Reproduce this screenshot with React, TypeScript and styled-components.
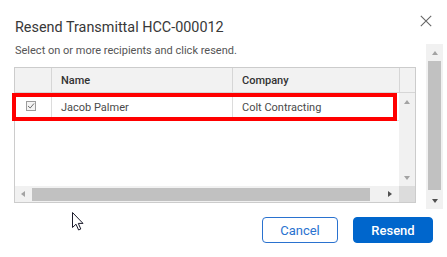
import React from "react";
import styled, { createGlobalStyle, css } from "styled-components";

const GlobalStyle = createGlobalStyle`
  html, body { margin: 0; padding: 0; background: #ffffff; }
  body { font-family: Roboto, "Liberation Sans", Arial, sans-serif; }
  * { box-sizing: border-box; }
`;

const Dialog = styled.div`
  position: relative;
  width: 447px;
  height: 257px;
  display: flex;
  flex-direction: column;
  background: #ffffff;
  overflow: hidden;
`;

const TitleBar = styled.div`
  display: flex;
  justify-content: space-between;
  align-items: flex-start;
  padding: 18px 15px 0 15px;
`;

const Title = styled.h1`
  margin: 0;
  font-size: 14.4px;
  line-height: 20px;
  font-weight: 400;
  color: #383838;
`;

const CloseButton = styled.button`
  margin-top: -3px;
  padding: 0;
  width: 12px;
  height: 12px;
  border: 0;
  background: transparent;
  display: flex;
  cursor: pointer;
`;

const Body = styled.div`
  display: flex;
  margin-top: 6px;
  height: 165px;
`;

const Content = styled.div`
  width: 426px;
  padding-left: 14px;
  display: flex;
  flex-direction: column;
`;

const Subtitle = styled.p`
  margin: 0;
  padding-left: 1px;
  font-size: 11px;
  line-height: 14px;
  color: #555555;
`;

const Grid = styled.div`
  margin-top: 9px;
  width: 402px;
  height: 136px;
  border: 1px solid #cccccc;
  display: flex;
  flex-direction: column;
`;

const HeaderRow = styled.div`
  display: grid;
  grid-template-columns: 37px 181px 167px 15px;
  height: 25px;
  background: #f2f2f2;
  border-bottom: 1px solid #d6d6d6;
`;

const HeaderCell = styled.div<{ $last?: boolean }>`
  padding: 1px 0 0 9px;
  font-size: 11px;
  line-height: 23px;
  font-weight: 500;
  color: #333333;
  ${(p) => !p.$last && css`border-right: 1px solid #d6d6d6;`}
`;

const DataArea = styled.div`
  display: flex;
  height: 93px;
`;

const Rows = styled.div`
  width: 384px;
  display: flex;
  flex-direction: column;
`;

const Row = styled.div`
  position: relative;
  display: grid;
  grid-template-columns: 37px 181px 1fr;
  height: 28px;
  border-bottom: 1px solid #e4e4e4;
`;

const Highlight = styled.div`
  position: absolute;
  left: -3px;
  top: 0;
  width: 385px;
  height: 28px;
  border: 4px solid #ff0000;
  pointer-events: none;
`;

const Cell = styled.div<{ $divider?: boolean }>`
  padding: 2px 0 0 9px;
  font-size: 11px;
  line-height: 26px;
  color: #4a4a4a;
  ${(p) => p.$divider && css`border-right: 1px solid #dcdcdc;`}
`;

const CheckCell = styled.div`
  display: flex;
  align-items: center;
  padding: 0 0 2px 11px;
  border-right: 1px solid #dcdcdc;
`;

const CheckBox = styled.span`
  width: 10px;
  height: 10px;
  border: 1px solid #9c9c9c;
  background: #f4f4f4;
  display: flex;
  align-items: center;
  justify-content: center;
`;

const VTrack = styled.div<{ $wide?: boolean }>`
  width: ${(p) => (p.$wide ? 17 : 16)}px;
  background: #f1f1f1;
  display: flex;
  flex-direction: column;
  align-items: center;
`;

const ArrowBox = styled.div<{ $size: number }>`
  width: 100%;
  height: ${(p) => p.$size}px;
  flex: none;
  display: flex;
  align-items: center;
  justify-content: center;
`;

const Spacer = styled.div`
  flex: 1;
`;

const Triangle = styled.span<{ $dir: "up" | "down" | "left" | "right"; $dark?: boolean }>`
  width: 0;
  height: 0;
  ${(p) => {
    const c = p.$dark ? "#505050" : "#a3a3a3";
    switch (p.$dir) {
      case "up":
        return css`border-left: 3.5px solid transparent; border-right: 3.5px solid transparent; border-bottom: 4px solid ${c};`;
      case "down":
        return css`border-left: 3.5px solid transparent; border-right: 3.5px solid transparent; border-top: 4px solid ${c};`;
      case "left":
        return css`border-top: 3.5px solid transparent; border-bottom: 3.5px solid transparent; border-right: 4px solid ${c};`;
      default:
        return css`border-top: 3.5px solid transparent; border-bottom: 3.5px solid transparent; border-left: 4px solid ${c};`;
    }
  }}
`;

const VThumb = styled.div`
  width: 13px;
  height: 129px;
  background: #c1c1c1;
`;

const HScrollRow = styled.div`
  display: flex;
  height: 16px;
`;

const HTrack = styled.div`
  width: 384px;
  background: #f1f1f1;
  display: flex;
  align-items: center;
`;

const HArrowBox = styled.div`
  width: 16px;
  height: 16px;
  flex: none;
  display: flex;
  align-items: center;
  justify-content: center;
`;

const HThumb = styled.div`
  width: 338px;
  height: 13px;
  background: #c1c1c1;
  margin-right: 12px;
  margin-left: 1px;
`;

const Corner = styled.div`
  flex: 1;
  background: #dcdcdc;
`;

const OuterScroll = styled(VTrack)`
  margin-right: 4px;
`;

const Footer = styled.div`
  display: flex;
  justify-content: flex-end;
  gap: 15px;
  padding: 8px 14px 0 0;
`;

const Button = styled.button<{ $primary?: boolean }>`
  height: 26px;
  width: ${(p) => (p.$primary ? 80 : 76)}px;
  border-radius: 4px;
  font-family: Roboto, "Liberation Sans", Arial, sans-serif;
  font-size: 13px;
  padding: 0;
  cursor: pointer;
  ${(p) =>
    p.$primary
      ? css`
          background: #0066cc;
          border: 1px solid #0066cc;
          color: #ffffff;
          font-weight: 500;
        `
      : css`
          background: #ffffff;
          border: 1px solid #2a72cf;
          color: #2a72cf;
          font-weight: 400;
        `}
`;

const Cursor = styled.svg`
  position: absolute;
  left: 71px;
  top: 211px;
  pointer-events: none;
`;

export default function App() {
  return (
    <>
      <GlobalStyle />
      <Dialog>
        <TitleBar>
          <Title>Resend Transmittal HCC-000012</Title>
          <CloseButton aria-label="Close">
            <svg width="12" height="12" viewBox="0 0 12 12">
              <path d="M0.8 0.8 L11.2 11.2 M11.2 0.8 L0.8 11.2" stroke="#666" strokeWidth="1.1" fill="none" />
            </svg>
          </CloseButton>
        </TitleBar>
        <Body>
          <Content>
            <Subtitle>Select on or more recipients and click resend.</Subtitle>
            <Grid>
              <HeaderRow>
                <HeaderCell />
                <HeaderCell>Name</HeaderCell>
                <HeaderCell>Company</HeaderCell>
                <HeaderCell $last />
              </HeaderRow>
              <DataArea>
                <Rows>
                  <Row>
                    <CheckCell>
                      <CheckBox>
                        <svg width="8" height="8" viewBox="0 0 8 8">
                          <path d="M1 4 L3.2 6 L7 1.5" stroke="#707070" strokeWidth="1" fill="none" />
                        </svg>
                      </CheckBox>
                    </CheckCell>
                    <Cell $divider>Jacob Palmer</Cell>
                    <Cell>Colt Contracting</Cell>
                    <Highlight />
                  </Row>
                </Rows>
                <VTrack>
                  <ArrowBox $size={18}>
                    <Triangle $dir="up" />
                  </ArrowBox>
                  <Spacer />
                  <ArrowBox $size={17}>
                    <Triangle $dir="down" />
                  </ArrowBox>
                </VTrack>
              </DataArea>
              <HScrollRow>
                <HTrack>
                  <HArrowBox>
                    <Triangle $dir="left" />
                  </HArrowBox>
                  <HThumb />
                  <HArrowBox>
                    <Triangle $dir="right" $dark />
                  </HArrowBox>
                </HTrack>
                <Corner />
              </HScrollRow>
            </Grid>
          </Content>
          <OuterScroll $wide>
            <ArrowBox $size={17}>
              <Triangle $dir="up" />
            </ArrowBox>
            <VThumb />
            <Spacer />
            <ArrowBox $size={17}>
              <Triangle $dir="down" $dark />
            </ArrowBox>
          </OuterScroll>
        </Body>
        <Footer>
          <Button>Cancel</Button>
          <Button $primary>Resend</Button>
        </Footer>
        <Cursor width="14" height="21" viewBox="0 0 14 21">
          <path
            d="M1.5 1.5 L1.5 16.5 L5 13.2 L7.6 19 L9.8 18 L7.3 12.4 L12 12.4 Z"
            fill="#ffffff"
            stroke="#1a1a2a"
            strokeWidth="1"
            strokeLinejoin="miter"
          />
        </Cursor>
      </Dialog>
    </>
  );
}
